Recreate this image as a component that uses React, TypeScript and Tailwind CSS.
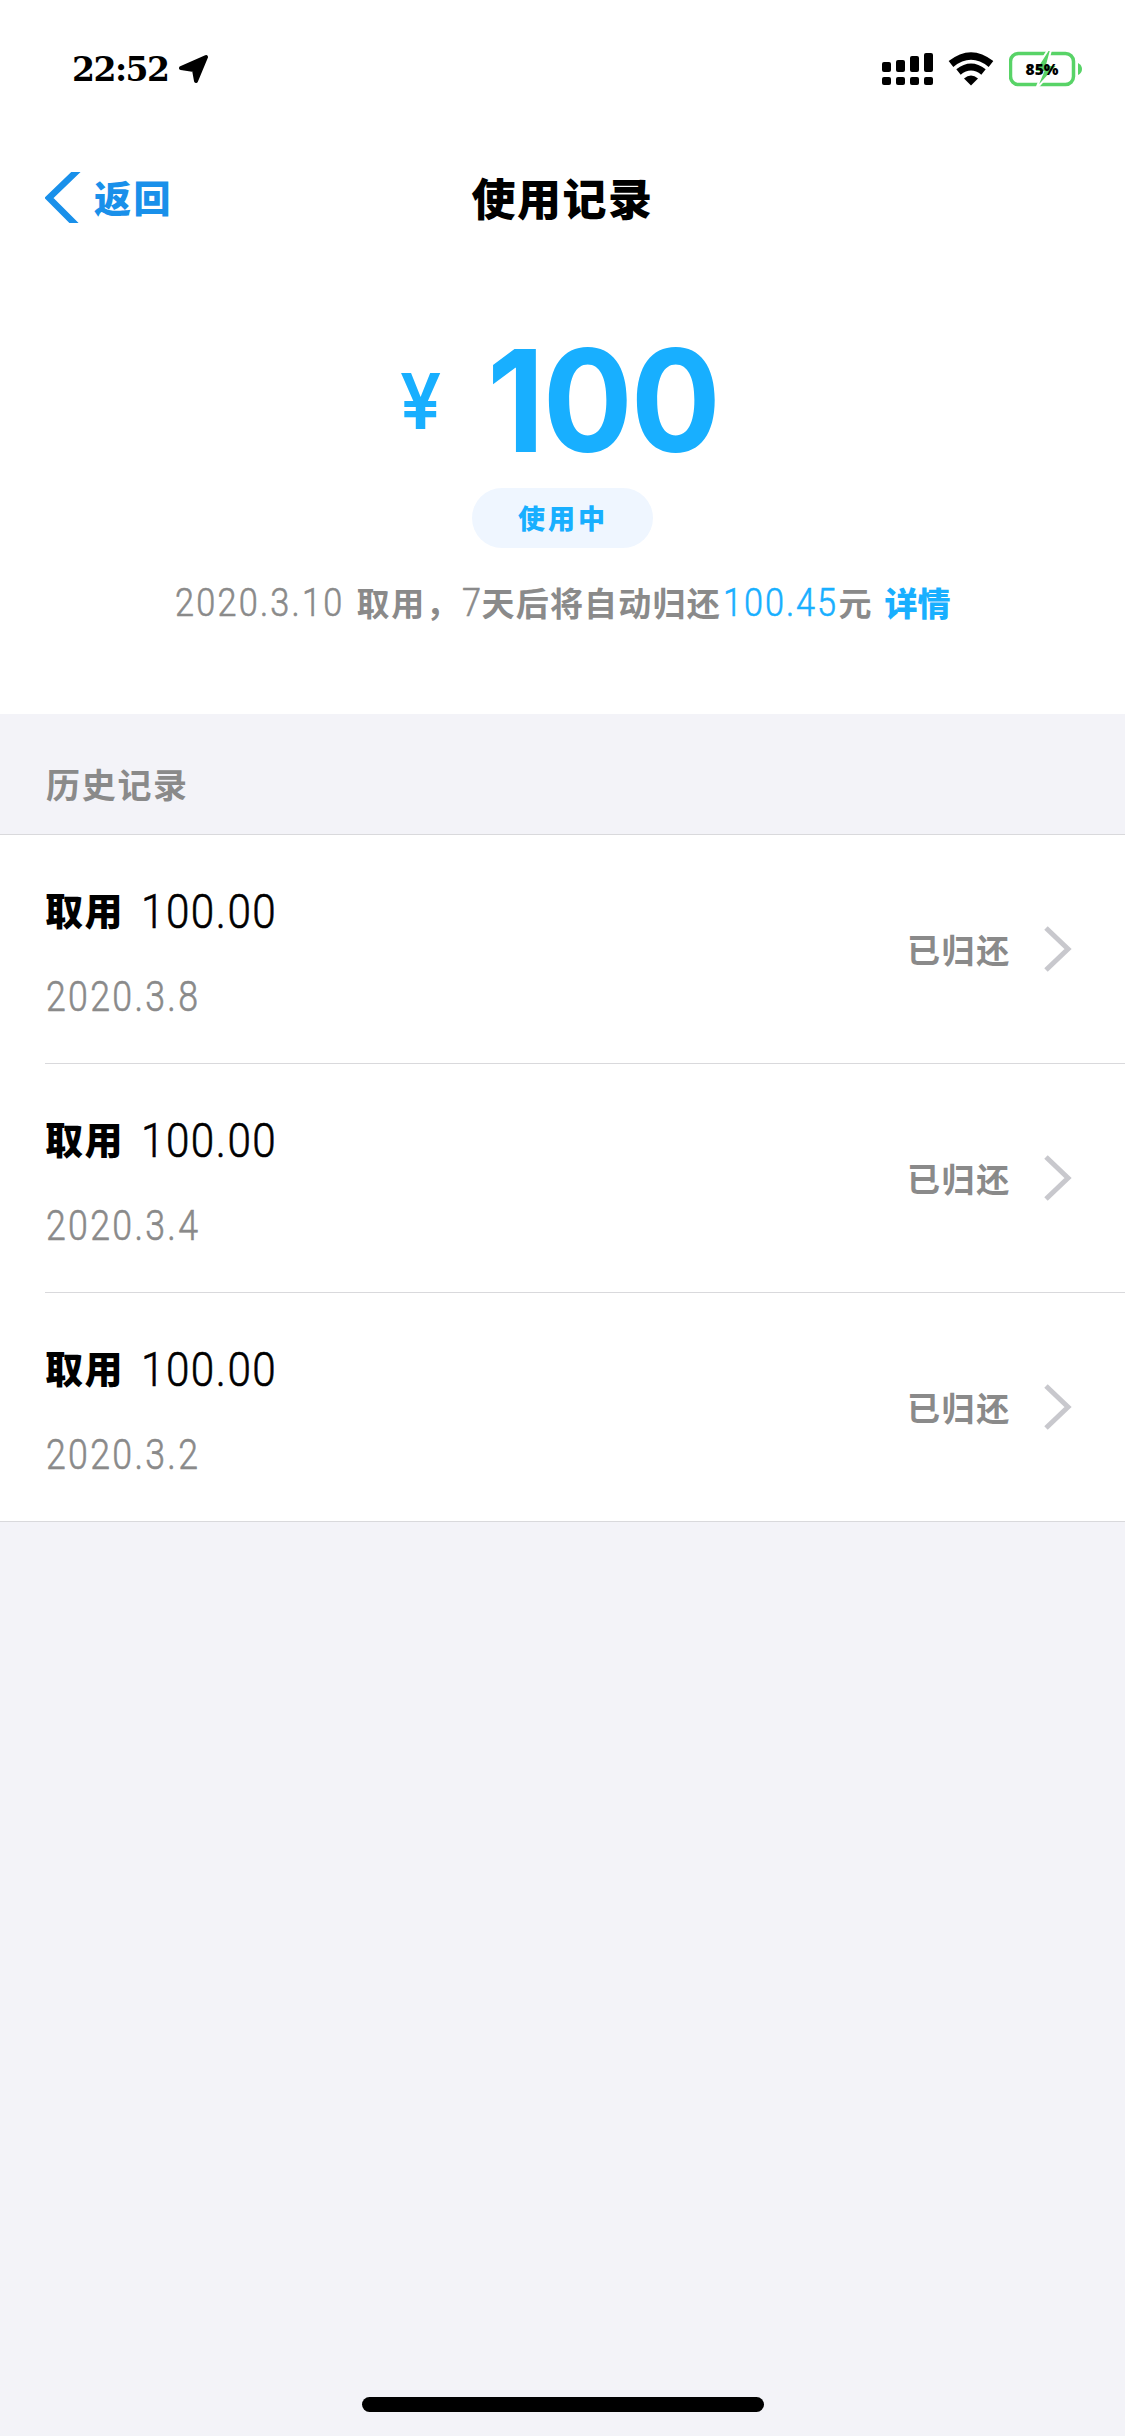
import clsx from "clsx";

const records = [
  { id: 1, label: "取用", amount: "100.00", date: "2020.3.8", status: "已归还" },
  { id: 2, label: "取用", amount: "100.00", date: "2020.3.4", status: "已归还" },
  { id: 3, label: "取用", amount: "100.00", date: "2020.3.2", status: "已归还" },
];

// Condensed light figures used for dates and amounts
const digits = "font-['Roboto',sans-serif] font-light origin-left [-webkit-text-stroke:0.6px_currentColor]";

const StatusBar = () => (
  <div className="h-[132px] flex items-start justify-between pl-[72px] pr-[43px] pt-[50px]">
    <div className="flex items-center h-[38px]">
      <span className="w-[107px] pt-[2px] font-['DejaVu_Serif',serif] font-bold text-[33px] leading-[38px] tracking-[-1.500px] whitespace-nowrap">
        22:52
      </span>
      <svg width="30" height="32" viewBox="0 0 30 32" className="mt-[-1px]">
        <path
          d="M2 15 27 4 17 28 15 17Z"
          fill="#000"
          stroke="#000"
          strokeWidth="4"
          strokeLinejoin="round"
        />
      </svg>
    </div>

    <div className="flex items-start">
      {/* Dual SIM signal */}
      <svg width="52" height="38" viewBox="0 0 52 38" className="mr-[14px]">
        <rect x="0" y="12" width="9" height="10" rx="2" />
        <rect x="14" y="10" width="9" height="12" rx="2" />
        <rect x="28" y="6" width="9" height="16" rx="2" />
        <rect x="42" y="3" width="9" height="19" rx="2" />
        <rect x="0" y="27" width="9" height="8" rx="2" />
        <rect x="14" y="27" width="9" height="8" rx="2" />
        <rect x="28" y="27" width="9" height="8" rx="2" />
        <rect x="42" y="27" width="9" height="8" rx="2" />
      </svg>
      {/* Wifi */}
      <svg width="46" height="38" viewBox="0 0 46 38" className="mr-[15px]">
        <path d="M3 14Q23-2 43 14" fill="none" stroke="#000" strokeWidth="7.500" />
        <path d="M10.500 22Q23 12 35.500 22" fill="none" stroke="#000" strokeWidth="7" />
        <path d="M16 28.500Q23 22.500 30 28.500L23 35.500Z" />
      </svg>
      {/* Battery */}
      <div className="relative w-[73px] h-[38px]">
        <svg width="73" height="38" viewBox="0 0 73 38">
          <rect x="1.500" y="3.500" width="63" height="31" rx="8" fill="none" stroke="#58d367" strokeWidth="3.500" />
          <path d="M69 13Q73 15 73 19Q73 23 69 25Z" fill="#58d367" />
          <path d="M39 0 25 22H34L27 39 49 15H38L42 0Z" fill="#58d367" stroke="#fff" strokeWidth="2" />
        </svg>
        <span className="absolute left-0 top-0 w-[66px] h-[38px] text-center font-['Open_Sans',sans-serif] font-extrabold text-[15.500px] leading-[39px]">
          85%
        </span>
      </div>
    </div>
  </div>
);

const NavBar = () => (
  <div className="h-[132px] grid grid-cols-3 items-center pl-[45px] pr-[45px] pb-[3px]">
    <button className="flex items-center text-[#1990ea]">
      <svg width="36" height="51" viewBox="0 0 36 51" className="mr-[13px] mt-[2px]">
        <path d="M34-3 4 26 32 54" fill="none" stroke="currentColor" strokeWidth="6.500" />
      </svg>
      <span className="font-black text-[37px] leading-[50px] tracking-[2.500px]">返回</span>
    </button>
    <h1 className="text-center font-black text-[44px] leading-[60px] tracking-[1.500px]">
      使用记录
    </h1>
  </div>
);

const Summary = () => (
  <section className="h-[450px] flex flex-col items-center text-[#18afff]">
    <div className="flex items-center h-[224px] pt-[56px] pb-[8px] pl-[9px]">
      <span className="w-[87px] mt-[1px] font-['Inter',sans-serif] font-semibold text-[77px] leading-[90px] origin-left scale-x-95">
        ¥
      </span>
      <span className="font-['Inter',sans-serif] font-bold text-[142px] leading-[168px] tracking-[-2px] origin-left scale-x-94">
        100
      </span>
    </div>
    <span className="w-[181px] h-[60px] rounded-full bg-[#eff6ff] text-center font-black text-[27px] leading-[60px] tracking-[3px] pl-[1px]">
      使用中
    </span>
    <p className="mt-[24px] h-[60px] flex items-center whitespace-nowrap text-[33px] leading-[60px] text-[#8a8a8a]">
      <span className={clsx(digits, "w-[182px] mt-[2px] text-[39px] tracking-[2.500px] scale-x-88")}>
        2020.3.10
      </span>
      <span className="w-[105px] font-bold tracking-[1.700px]">取用，</span>
      <span className={clsx(digits, "w-[20px] mt-[2px] text-[39px] scale-x-88")}>7</span>
      <span className="w-[241px] font-bold tracking-[1.200px]">天后将自动归还</span>
      <span className={clsx(digits, "w-[116px] mt-[2px] text-[39px] tracking-[2.200px] scale-x-88 text-[#18afff]")}>
        100.45
      </span>
      <span className="w-[46px] font-bold">元</span>
      <a href="#" className="font-black text-[33px] text-[#18afff]">
        详情
      </a>
    </p>
  </section>
);

const History = () => (
  <section>
    <h2 className="h-[120px] pl-[46px] pt-[13px] font-bold text-[34px] leading-[114px] tracking-[1.700px] text-[#8a8a8a]">
      历史记录
    </h2>
    <ul className="bg-white border-y border-[#d9d9dc]">
      {records.map((r, i) => (
        <li key={r.id} className="pl-[45px]">
          <div
            className={clsx(
              "flex items-center justify-between pr-[53px]",
              i < records.length - 1 ? "h-[229px] border-b border-[#d9d9dc]" : "h-[228px]"
            )}
          >
            <div className="pt-[4px]">
              <div className="flex items-center h-[60px]">
                <span className="w-[96px] font-black text-[38px] tracking-[1.500px]">{r.label}</span>
                <span className={clsx(digits, "mt-[7px] text-[48px] leading-[60px] tracking-[1.700px] scale-x-88")}>
                  {r.amount}
                </span>
              </div>
              <div className={clsx(digits, "ml-[1px] mt-[29px] h-[57px] text-[42px] leading-[60px] tracking-[2.700px] scale-x-85 text-[#8a8a8a]")}>
                {r.date}
              </div>
            </div>
            <div className="flex items-center text-[#8a8a8a]">
              <span className="font-bold text-[33px] leading-[50px] tracking-[1.700px]">{r.status}</span>
              <svg width="28" height="46" viewBox="0 0 28 46" className="ml-[33px]">
                <path d="M2 2 24 23 2 44" fill="none" stroke="#c8c8cd" strokeWidth="5" />
              </svg>
            </div>
          </div>
        </li>
      ))}
    </ul>
  </section>
);

const App = () => {
  return (
    <div className="w-[1125px] h-[2436px] flex flex-col overflow-hidden bg-[#f3f3f8] text-black font-['Noto_Sans_CJK_SC',sans-serif]">
      <header className="bg-white">
        <StatusBar />
        <NavBar />
        <Summary />
      </header>
      <History />
      <div className="mt-auto mb-6 mx-auto w-[402px] h-[15px] rounded-full bg-black" />
    </div>
  );
};

export default App;
